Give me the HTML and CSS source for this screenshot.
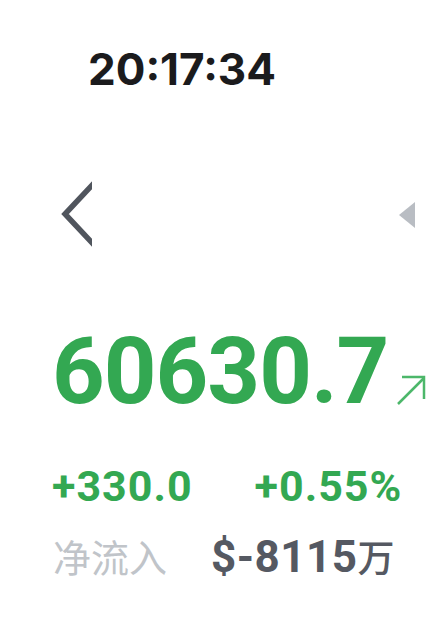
FILE: index.html
```html
<!DOCTYPE html>
<html lang="zh">

<head>
    <meta charset="UTF-8">
    <meta name="viewport" content="width=device-width, initial-scale=1.0">
    <title>Ticker</title>
    <link rel="stylesheet" href="styles.css">
</head>

<body>

    <div class="screen">
        <div class="clock">20:17:34</div>

        <div class="nav">
            <svg class="back" width="36" height="70" viewBox="0 0 36 70">
                <polyline points="42,-1 9,34 42,69" fill="none" stroke="#50555d" stroke-width="5.5" />
            </svg>
            <svg class="tri" width="16" height="26" viewBox="0 0 16 26">
                <polygon points="16,0 16,26 0,13" fill="#b9bdc3" />
            </svg>
        </div>

        <div class="price">
            <span id="last">60630.7</span>
            <svg class="up" width="32" height="32" viewBox="0 0 32 32">
                <g fill="none" stroke="#4cb76a" stroke-width="2.5">
                    <line x1="2" y1="30" x2="28" y2="4" />
                    <polyline points="6,3 28,3 28,25" />
                </g>
            </svg>
        </div>

        <div class="change">
            <span id="diff">+330.0</span>
            <span id="pct">+0.55%</span>
        </div>

        <div class="flow">
            <span class="label">净流入</span>
            <span class="value">$-8115<small>万</small></span>
        </div>
    </div>

</body>

</html>
```

FILE: styles.css
```css
* {
    margin: 0;
    padding: 0;
}

body {
    background-color: #fff;
    font-family: Roboto, "Noto Sans CJK SC", sans-serif;
}

.screen {
    width: 432px;
    height: 630px;
    display: flex;
    flex-direction: column;
}

.clock {
    font-family: Inter, sans-serif;
    font-weight: 700;
    font-size: 44px;
    line-height: 1;
    color: #1b1b1d;
    padding: 47px 0 0 88px;
}

.nav {
    display: flex;
    justify-content: space-between;
    align-items: center;
    height: 70px;
    margin-top: 89px;
    padding: 0 17px 0 56px;
}

.price {
    display: flex;
    align-items: flex-end;
    margin-top: 76px;
    padding-left: 52px;
    color: #33a852;
    font-weight: 700;
    font-size: 92px;
    line-height: 1;
    letter-spacing: -1px;

    & .up {
        margin: 0 0 12px 8px;
    }
}

.change {
    display: flex;
    gap: 62px;
    margin-top: 47px;
    padding-left: 52px;
    color: #33a852;
    font-weight: 700;
    font-size: 43px;
    line-height: 1;
    letter-spacing: 1px;
}

.flow {
    display: flex;
    align-items: baseline;
    gap: 44px;
    margin-top: 27px;
    padding-left: 53px;
    line-height: 1;

    & .label {
        font-size: 38px;
        color: #c0c4c9;
    }

    & .value {
        font-size: 44px;
        font-weight: 700;
        color: #555962;
        letter-spacing: 0.5px;

        & small {
            font-size: 37px;
            font-weight: 500;
        }
    }
}
```
